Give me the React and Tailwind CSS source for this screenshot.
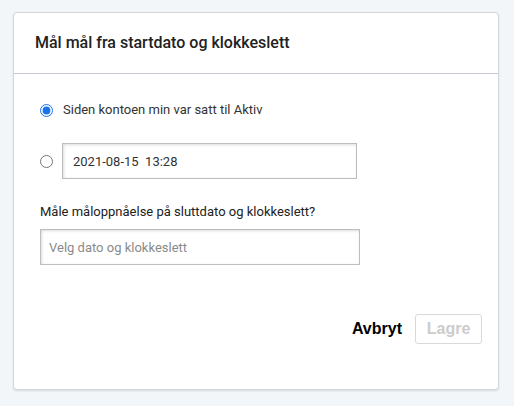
export default function App() {
  return (
    <div className="min-h-[406px] bg-[#f3f6f9] pt-[12px] pl-[13px] font-['Roboto',sans-serif]">
      <div className="w-[486px] h-[378px] bg-white border border-[#d3d6da] rounded-[4px] shadow-[0_1px_2px_rgba(0,0,0,0.12)] flex flex-col">
        <div className="h-[61px] border-b border-[#c9c9d1] flex items-center pl-[21px]">
          <h2 className="text-[16px] font-medium text-[#222] leading-none">Mål mål fra startdato og klokkeslett</h2>
        </div>
        <div className="flex-1 flex flex-col pl-[26px] pt-[26px]">
          <label className="flex items-center h-[20px] gap-[10px] text-[13px] text-[#333]">
            <input type="radio" name="start" defaultChecked className="m-0 w-[13px] h-[13px] accent-[#1a73e8]" />
            <span>Siden kontoen min var satt til Aktiv</span>
          </label>
          <div className="flex items-center mt-[23px] gap-[9px]">
            <input type="radio" name="start" className="m-0 w-[13px] h-[13px]" />
            <input
              type="text"
              defaultValue="2021-08-15  13:28"
              className="w-[295px] h-[36px] border border-[#bdbdbd] shadow-[inset_1px_1px_3px_rgba(0,0,0,0.14)] px-[10px] text-[13px] text-[#333] outline-none"
            />
          </div>
          <p className="mt-[25px] text-[13px] text-[#222] leading-[16px]">Måle måloppnåelse på sluttdato og klokkeslett?</p>
          <input
            type="text"
            placeholder="Velg dato og klokkeslett"
            className="mt-[9px] w-[320px] h-[36px] border border-[#bdbdbd] shadow-[inset_1px_1px_3px_rgba(0,0,0,0.14)] px-[8px] text-[13px] text-[#333] placeholder:text-[#8a8a8a] outline-none"
          />
          <div className="flex justify-end items-center mt-[49px] pr-[16px] gap-[13px] font-['Liberation_Sans',Arial,sans-serif]">
            <button className="text-[16px] font-bold text-black">Avbryt</button>
            <button disabled className="w-[67px] h-[30px] border border-[#d9d9d9] rounded-[3px] text-[16px] font-bold text-[#cccccc]">Lagre</button>
          </div>
        </div>
      </div>
    </div>
  )
}
